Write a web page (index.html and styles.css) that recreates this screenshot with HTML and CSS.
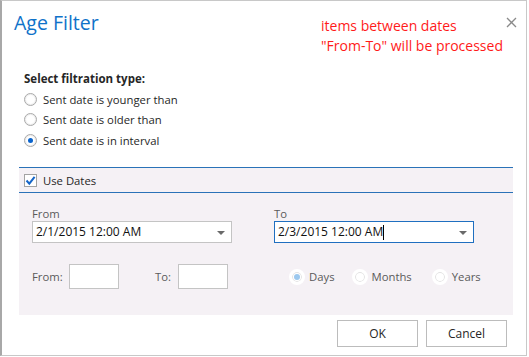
FILE: index.html
```html
<!DOCTYPE html>
<html lang="en">
  <head>
    <meta charset="UTF-8" />
    <title>Age Filter</title>
    <link rel="stylesheet" href="styles.css">
  </head>
  <body>
    <div class="dialog">
      <header class="dialog-head">
        <h1 class="title">Age Filter</h1>
        <p class="note">items between dates<br />"From-To" will be processed</p>
        <span class="close">
          <svg width="11" height="11" viewBox="0 0 11 11">
            <path d="M1 1 L10 10 M10 1 L1 10" stroke="#8a8a8a" stroke-width="1.3" fill="none" />
          </svg>
        </span>
      </header>

      <!-- Type de filtre -->
      <section class="filter-type">
        <h2>Select filtration type:</h2>
        <label class="opt"><span class="radio"></span>Sent date is younger than</label>
        <label class="opt"><span class="radio"></span>Sent date is older than</label>
        <label class="opt"><span class="radio checked"></span>Sent date is in interval</label>
      </section>

      <!-- Panneau des dates -->
      <section class="dates">
        <div class="dates-head">
          <span class="check">
            <svg width="11" height="11" viewBox="0 0 11 11">
              <path d="M1.5 5.5 L4.3 8.6 L9.6 1.8" stroke="#1565c8" stroke-width="2" fill="none" />
            </svg>
          </span>
          Use Dates
        </div>
        <div class="dates-body">
          <div class="col">
            <span class="lbl">From</span>
            <div class="combo">2/1/2015 12:00 AM<span class="arrow"></span></div>
          </div>
          <div class="col">
            <span class="lbl">To</span>
            <div class="combo focus">2/3/2015 12:00 AM<span class="caret"></span><span class="arrow"></span></div>
          </div>
          <div class="range">
            <span class="lbl-inline">From:</span>
            <span class="box"></span>
            <span class="lbl-inline to">To:</span>
            <span class="box"></span>
          </div>
          <div class="units">
            <span class="unit"><span class="radio soft on"></span>Days</span>
            <span class="unit"><span class="radio soft"></span>Months</span>
            <span class="unit"><span class="radio soft"></span>Years</span>
          </div>
        </div>
      </section>

      <footer class="actions">
        <button>OK</button>
        <button>Cancel</button>
      </footer>
    </div>
  </body>
</html>
```

FILE: styles.css
```css
:root {
  --title-blue: #0f72c9;
  --line-blue: #2a72b8;
  --panel: #f5f1f5;
  --text: #262626;
  --muted: #5a5a5a;
  --border: #c4c4c4;
}

* {
  box-sizing: border-box;
  margin: 0;
  padding: 0;
}

body {
  font-family: "Open Sans", "Noto Sans", sans-serif;
  font-size: 11.3px;
  color: var(--text);
  background: #fff;
}

.dialog {
  width: 527px;
  height: 356px;
  border: 1px solid #c8c8c8;
  border-left: 2px solid #a8a8a8;
  display: flex;
  flex-direction: column;
}

.dialog-head {
  display: flex;
  align-items: flex-start;
  height: 70px;
}

.title {
  font-weight: 400;
  font-size: 19.5px;
  color: var(--title-blue);
  margin: 9px 0 0 12px;
  width: 307px;
  line-height: 26px;
}

.note {
  color: #ff1a1a;
  font-size: 14px;
  line-height: 20px;
  margin-top: 15px;
  width: 184px;
}

.close {
  margin: 15px 0 0 1px;
}

.filter-type {
  padding-left: 22px;
  height: 96px;
}

.filter-type h2 {
  font-size: 11.5px;
  font-weight: 700;
  line-height: 16px;
  margin-bottom: 2px;
}

.opt {
  display: flex;
  align-items: center;
  gap: 6px;
  height: 20.5px;
}

.radio {
  width: 13px;
  height: 13px;
  border-radius: 50%;
  border: 1px solid #a9a9a9;
  background: #fff;
  display: flex;
  align-items: center;
  justify-content: center;
  box-shadow: inset 0 0 1px 1px #ececec;
}

.radio.checked::after {
  content: "";
  width: 5px;
  height: 5px;
  border-radius: 50%;
  background: #0a63cc;
}

.dates {
  margin: 0 13px 0 17px;
  background: var(--panel);
  height: 148px;
}

.dates-head {
  height: 26px;
  border-top: 1px solid var(--line-blue);
  border-bottom: 1px solid var(--line-blue);
  display: flex;
  align-items: center;
  gap: 6px;
  padding-left: 5px;
}

.check {
  width: 13px;
  height: 13px;
  border: 1px solid #a3a3a3;
  background: #fff;
  display: flex;
  align-items: center;
  justify-content: center;
}

.dates-body {
  display: grid;
  grid-template-columns: 200px 200px;
  column-gap: 42px;
  row-gap: 21px;
  padding: 13px 0 0 13px;
}

.col {
  display: flex;
  flex-direction: column;
}

.lbl {
  color: var(--muted);
  line-height: 15px;
}

.combo {
  position: relative;
  height: 22px;
  border: 1px solid var(--border);
  background: #fff;
  padding-left: 3px;
  line-height: 20px;
  font-size: 12px;
  color: #111;
  display: flex;
  align-items: center;
}

.combo.focus {
  border-color: #1f6fc0;
}

.caret {
  width: 1px;
  height: 15px;
  background: #000;
}

.arrow {
  position: absolute;
  right: 6px;
  top: 9px;
  border-left: 4px solid transparent;
  border-right: 4px solid transparent;
  border-top: 4px solid #6a6a6a;
}

.range {
  display: flex;
  align-items: center;
}

.lbl-inline {
  color: var(--muted);
  width: 37px;
}

.lbl-inline.to {
  width: 23px;
  margin-left: 36px;
}

.box {
  width: 50px;
  height: 25px;
  border: 1px solid var(--border);
  background: #fff;
}

.units {
  display: flex;
  align-items: center;
  padding-left: 15px;
}

.unit {
  display: flex;
  align-items: center;
  gap: 4px;
  color: var(--muted);
  margin-right: 17px;
}

.unit:nth-child(2) {
  margin-right: 20px;
}

.radio.soft {
  width: 16px;
  height: 16px;
  border: 3px solid #fff;
  box-shadow: inset 0 0 0 1px #e2e2e2;
  background: #fff;
}

.radio.soft.on::after {
  content: "";
  width: 6px;
  height: 6px;
  border-radius: 50%;
  background: #9cc8ee;
}

.actions {
  display: flex;
  justify-content: flex-end;
  gap: 8px;
  padding: 5px 19px 0 0;
}

.actions button {
  width: 81px;
  height: 27px;
  border: 1px solid #bcbcbc;
  background: #fff;
  font-family: inherit;
  font-size: 12px;
  color: var(--text);
}
```
